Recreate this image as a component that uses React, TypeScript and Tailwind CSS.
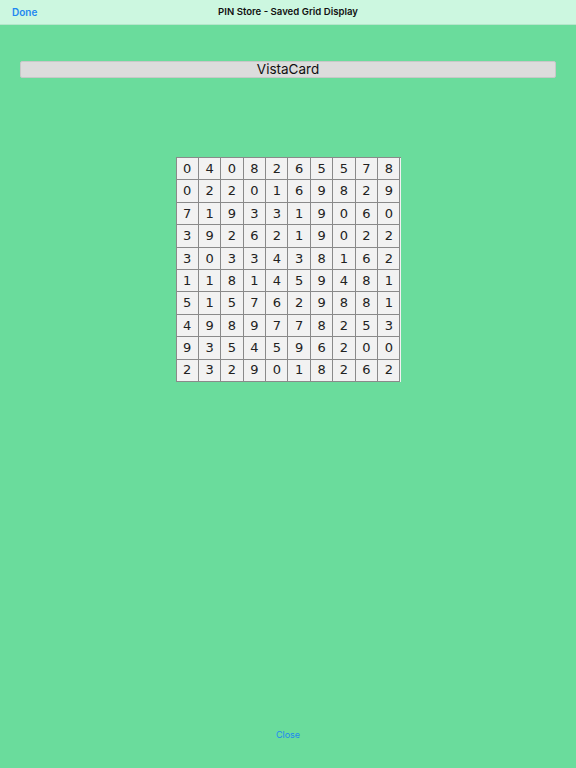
import React from "react";

const rows = [
  "0408265578",
  "0220169829",
  "7193319060",
  "3926219022",
  "3033438162",
  "1181459481",
  "5157629881",
  "4989778253",
  "9354596200",
  "2329018262",
];

export default function App() {
  return (
    <div
      className="w-[576px] h-[768px] bg-[#6adc9c] flex flex-col"
      style={{ fontFamily: '"Inter", "Liberation Sans", sans-serif' }}
    >
      <div className="h-[25px] bg-[#ccf7e0] border-b border-[#b5e6cb] flex items-center relative shrink-0">
        <span className="absolute left-[12px] text-[10px] font-semibold text-[#1e88f0]">Done</span>
        <div className="flex-1 text-center text-[9.6px] font-semibold text-[#111]">
          PIN Store - Saved Grid Display
        </div>
      </div>

      <div className="mt-[36px] mx-[20px] h-[17px] bg-[#dcdcdc] border border-[#c8c8c8] rounded-[2px] flex items-center justify-center text-[13.5px] text-[#111] leading-none">
        VistaCard
      </div>

      <div className="mt-[79px] flex justify-center">
        <div
          className="grid grid-cols-10 w-[225px] border-l border-t border-[#8a8a8a] bg-[#f2f2f2]"
          style={{ fontFamily: '"DejaVu Sans", Verdana, sans-serif' }}
        >
          {rows.flatMap((r, i) =>
            r.split("").map((d, j) => (
              <div
                key={`${i}-${j}`}
                className="h-[22.4px] border-r border-b border-[#8a8a8a] flex items-center justify-center text-[13px] text-[#222]"
              >
                {d}
              </div>
            ))
          )}
        </div>
      </div>

      <div className="flex-1" />
      <div className="h-[40px] flex justify-center">
        <span className="text-[9px] text-[#1e88f0]">Close</span>
      </div>
    </div>
  );
}
